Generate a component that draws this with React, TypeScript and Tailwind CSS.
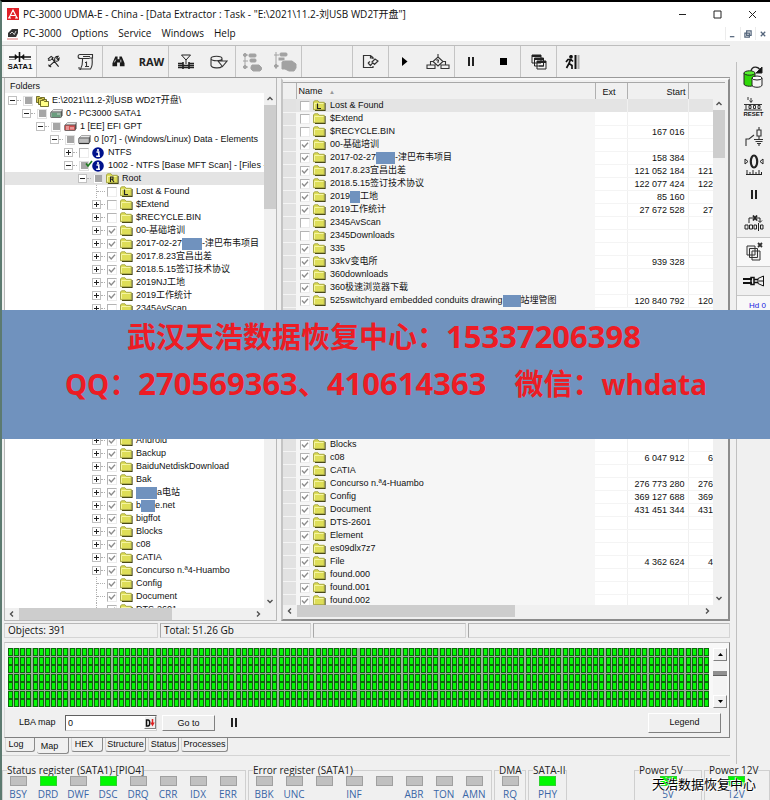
import React from "react";

const UI = "font-['Open_Sans','Noto_Sans_CJK_SC',sans-serif]";
const SMALL = "text-[9px] font-['Liberation_Sans','Noto_Sans_CJK_SC',sans-serif]";

type Tick = "on" | "off" | "mixed";
type IconKind = "folder" | "L" | "R" | "stack" | "disk" | "efi" | "part" | "info";

/* A name is written as plain text; "#20#" marks a masked stretch 20px wide. */
function Name({ text }: { text: string }) {
  return (
    <>
      {text
        .split(/(#\d+#)/)
        .filter(Boolean)
        .map((p, i) =>
          /^#\d+#$/.test(p) ? (
            <span
              key={i}
              className="inline-block h-3 bg-[#7092be] align-bottom"
              style={{ width: Number(p.slice(1, -1)) }}
            />
          ) : (
            <React.Fragment key={i}>{p}</React.Fragment>
          ),
        )}
    </>
  );
}

function Check({ tick, label }: { tick: Tick; label: string }) {
  if (tick === "mixed")
    return (
      <span className="flex size-[10px] shrink-0 items-center justify-center border border-[#e0e0e0] bg-white">
        <input type="checkbox" aria-label={label} className="size-[7px] appearance-none bg-[#a6a6a6]" />
      </span>
    );
  return (
    <span className="relative flex size-[10px] shrink-0">
      <input
        type="checkbox"
        defaultChecked={tick === "on"}
        aria-label={label}
        className="peer size-[10px] appearance-none border border-t-[#b4b4b4] border-r-[#ececec] border-b-[#ececec] border-l-[#b4b4b4] bg-white"
      />
      <svg viewBox="0 0 10 10" className="pointer-events-none absolute inset-0 hidden peer-checked:block" fill="none" stroke="#8c8c8c" strokeWidth="1.3">
        <path d="M2 4.5 L4.2 7 L8 2.8" />
      </svg>
    </span>
  );
}

function RowIcon({ kind }: { kind: IconKind }) {
  if (kind === "info")
    return (
      <svg viewBox="0 0 12 12" className="size-3 shrink-0">
        <circle cx="6" cy="6" r="5.8" fill="#00128c" />
        <circle cx="6" cy="3" r="1.1" fill="#fff" />
        <path d="M4.5 5h2.3v4M4.2 9.2h3.8" stroke="#fff" strokeWidth="1.5" fill="none" />
      </svg>
    );
  if (kind === "disk" || kind === "efi" || kind === "part")
    return (
      <svg viewBox="0 0 13 11" className="h-[11px] w-[13px] shrink-0">
        <path d="M1 4 L3.5 1.5 H12.5 L11 4 Z" fill="#e8e8e8" stroke="#888" strokeWidth=".7" />
        <path d="M11 4 L12.5 1.5 V7.5 L11 9.5 Z" fill="#444" />
        <rect x=".7" y="4" width="10.5" height="5.5" rx=".6" fill={kind === "efi" ? "#d55050" : kind === "disk" ? "#9db8a8" : "#bdbdbd"} stroke="#555" strokeWidth=".8" />
        {kind === "disk" && <path d="M2 6h5M2 8h8" stroke="#2d7d4c" strokeWidth=".9" />}
        {kind === "efi" && <path d="M2 6h3M2 8h3M7 6v2.500M9 6v2.500" stroke="#fff" strokeWidth=".8" />}
        {kind === "part" && <path d="M1 9.500h10" stroke="#333" strokeWidth="1.200" />}
      </svg>
    );
  if (kind === "stack")
    return (
      <svg viewBox="0 0 13 12" className="h-3 w-[13px] shrink-0" stroke="#54540c" strokeWidth=".8">
        <path d="M.5 1.500h3l1 1h4v5h-8z" fill="#d8c850" />
        <path d="M2.500 3.500h3l1 1h4v5h-8z" fill="#e0d860" />
        <path d="M4.500 5.500h3l1 1h4v5h-8z" fill="#ffff88" />
      </svg>
    );
  return (
    <svg viewBox="0 0 13 11" className="h-[11px] w-[13px] shrink-0">
      <path d="M12 3 V10.400 H2" fill="none" stroke="#3a3a10" strokeWidth="1.200" />
      <path d="M.5 9.700 V2 L1.500 .8 H5 L6.200 2.300 H11.300 V9.700 Z" fill="#dede58" stroke="#a0a040" strokeWidth=".9" />
      <path d="M1.500 8.700 V3.500 H10.500" fill="none" stroke="#f7f7a8" strokeWidth=".9" />
      {kind === "L" && <path d="M4.500 3.500v5h3.500" fill="none" stroke="#222" strokeWidth="1.200" />}
      {kind === "R" && <path d="M4.500 9V4h2.500v2.200h-2.500M6 6.200L8 9" fill="none" stroke="#222" strokeWidth="1.100" />}
    </svg>
  );
}

interface Node {
  depth: number;
  exp?: "+" | "-";
  tick: Tick;
  icon: IconKind;
  text: string;
  selected?: boolean;
}

const f = (text: string, tick: Tick = "on"): Node => ({ depth: 6, exp: "+", tick, icon: "folder", text });
const leaf = (text: string, tick: Tick = "on", icon: IconKind = "folder"): Node => ({ depth: 6, tick, icon, text });

const treeTop: Node[] = [
  { depth: 0, exp: "-", tick: "mixed", icon: "stack", text: "E:\\2021\\11.2-刘USB WD2T开盘\\" },
  { depth: 1, exp: "-", tick: "mixed", icon: "disk", text: "0 - PC3000 SATA1" },
  { depth: 2, exp: "-", tick: "mixed", icon: "efi", text: "1 [EE] EFI GPT" },
  { depth: 3, exp: "-", tick: "mixed", icon: "part", text: "0 [07] - (Windows/Linux) Data - Elements" },
  { depth: 4, exp: "+", tick: "off", icon: "info", text: "NTFS" },
  { depth: 4, exp: "-", tick: "mixed", icon: "info", text: "1002 - NTFS [Base MFT Scan] - [Files - 55" },
  { depth: 5, exp: "-", tick: "mixed", icon: "R", text: "Root", selected: true },
  leaf("Lost & Found", "off", "L"),
  f("$Extend", "off"),
  f("$RECYCLE.BIN", "off"),
  f("00-基础培训"),
  f("2017-02-27#20#-津巴布韦项目"),
  f("2017.8.23宜昌出差"),
  f("2018.5.15签订技术协议"),
  f("2019NJ工地"),
  f("2019工作统计"),
  f("2345AvScan", "off"),
];
const treeBottom: Node[] = [
  f("Android"),
  f("Backup"),
  f("BaiduNetdiskDownload"),
  f("Bak"),
  f("#21#a电站"),
  f("b#14#e.net"),
  f("bigffot"),
  f("Blocks"),
  f("c08"),
  f("CATIA"),
  f("Concurso n.ª4-Huambo"),
  leaf("Config"),
  leaf("Document"),
  leaf("DTS-2601"),
];

function TreeRow({ n }: { n: Node }) {
  return (
    <li
      className={`flex h-[13px] shrink-0 items-center whitespace-nowrap ${n.selected ? "bg-[#e4e4e4]" : ""}`}
      style={{ paddingLeft: 3 + n.depth * 14 }}
    >
      <span className="flex w-[15px] shrink-0 items-center">
        {n.exp ? (
          <>
            <button
              aria-label={n.exp === "+" ? "Expand" : "Collapse"}
              className="flex size-[9px] shrink-0 items-center justify-center border border-[#c0c0c0] bg-white"
            >
              <svg viewBox="0 0 5 5" className="size-[5px]" stroke="#222">
                <path d={n.exp === "+" ? "M0 2.500h5M2.500 0v5" : "M0 2.500h5"} />
              </svg>
            </button>
            <span className="w-1 border-t border-dotted border-[#b0b0b0]" />
          </>
        ) : (
          <span className="ml-1 flex h-[13px] w-[9px] items-center border-l border-dotted border-[#b0b0b0]">
            <span className="w-full border-t border-dotted border-[#b0b0b0]" />
          </span>
        )}
      </span>
      <span className="relative flex">
        <Check tick={n.tick} label={n.text} />
        {n.tick === "mixed" && n.depth === 4 && (
          <svg viewBox="0 0 8 8" className="absolute -top-px left-[6px] size-2" fill="none" stroke="#1c7a1c" strokeWidth="1.600">
            <path d="M1 3.500L3 6L7 1" />
          </svg>
        )}
      </span>
      <span className="ml-[2px] flex w-[14px] shrink-0 justify-center">
        <RowIcon kind={n.icon} />
      </span>
      <span className="ml-[3px] leading-[13px]">
        <Name text={n.text} />
      </span>
    </li>
  );
}

type FileRow = [string, Tick, string?];
const filesTop: FileRow[] = [
  ["Lost & Found", "off"],
  ["$Extend", "off"],
  ["$RECYCLE.BIN", "off", "167 016"],
  ["00-基础培训", "on"],
  ["2017-02-27#19#-津巴布韦项目", "on", "158 384"],
  ["2017.8.23宜昌出差", "on", "121 052 184"],
  ["2018.5.15签订技术协议", "on", "122 077 424"],
  ["2019#10#工地", "on", "85 160"],
  ["2019工作统计", "on", "27 672 528"],
  ["2345AvScan", "off"],
  ["2345Downloads", "off"],
  ["335", "on"],
  ["33kV变电所", "on", "939 328"],
  ["360downloads", "on"],
  ["360极速浏览器下载", "on"],
  ["525switchyard embedded conduits drawing#18#站埋管图", "on", "120 840 792"],
];
const filesBottom: FileRow[] = [
  ["Blocks", "on"],
  ["c08", "on", "6 047 912"],
  ["CATIA", "on"],
  ["Concurso n.ª4-Huambo", "on", "276 773 280"],
  ["Config", "on", "369 127 688"],
  ["Document", "on", "431 451 344"],
  ["DTS-2601", "on"],
  ["Element", "on"],
  ["es09dlx7z7", "on"],
  ["File", "on", "4 362 624"],
  ["found.000", "on"],
  ["found.001", "on"],
  ["found.002", "on"],
];

/* Size column: only its first digits fit beside the scroll bar. */
function sizeHead(start?: string) {
  if (!start || start.length < 9) return "";
  return start.split(" ")[0];
}

function FileTr({ row, first }: { row: FileRow; first?: boolean }) {
  const [name, tick, start] = row;
  const cell = first ? "bg-[#e4e4e4]" : "border-b border-[#f4f4f4] bg-white";
  return (
    <tr className="h-[13px]">
      <td className="border-b border-[#f4f4f4] bg-[#e2e2e2] p-0" />
      <td className={`overflow-hidden p-0 ${first ? "bg-[#e4e4e4]" : "bg-[#f6f6f6]"}`}>
        <div className="flex h-[13px] items-center pl-1 leading-[13px] whitespace-nowrap">
          <Check tick={tick} label={name} />
          <span className="mx-[2px] flex w-[14px] justify-center">
            <RowIcon kind={first ? "L" : "folder"} />
          </span>
          <span className="ml-[2px]">
            <Name text={name} />
          </span>
        </div>
      </td>
      <td className={`p-0 ${cell}`} />
      <td className={`border-l border-l-[#f0f0f0] p-0 pr-[3px] text-right leading-3 ${cell}`}>{start}</td>
      <td className={`border-l border-l-[#f0f0f0] p-0 pr-3 text-right leading-3 ${cell}`}>{sizeHead(start)}</td>
    </tr>
  );
}

function Chevron({ d }: { d: "up" | "down" | "left" | "right" }) {
  const path = {
    up: "M1.500 5 L4 2.500 L6.500 5",
    down: "M1.500 3 L4 5.500 L6.500 3",
    left: "M5 1.500 L2.500 4 L5 6.500",
    right: "M3 1.500 L5.500 4 L3 6.500",
  }[d];
  return (
    <svg viewBox="0 0 8 8" className="size-2" fill="none" stroke="#505050" strokeWidth="1.400">
      <path d={path} />
    </svg>
  );
}

function VScroll({ thumb }: { thumb: string }) {
  return (
    <div className="flex h-full w-full flex-col items-center bg-[#f0f0f0]">
      <button aria-label="Scroll up" className="flex h-3 w-full shrink-0 items-center justify-center">
        <Chevron d="up" />
      </button>
      <div className={`w-full bg-[#cdcdcd] ${thumb}`} />
      <button aria-label="Scroll down" className="mt-auto flex h-[14px] w-full items-center justify-center">
        <Chevron d="down" />
      </button>
    </div>
  );
}

function HScroll({ thumb }: { thumb: string }) {
  return (
    <div className="flex h-3 shrink-0 items-stretch bg-[#f0f0f0] pr-3">
      <button aria-label="Scroll left" className="flex w-[14px] items-center justify-center">
        <Chevron d="left" />
      </button>
      <div className={`bg-[#cdcdcd] ${thumb}`} />
      <button aria-label="Scroll right" className="ml-auto flex w-3 items-center justify-center">
        <Chevron d="right" />
      </button>
    </div>
  );
}

/* Toolbar ------------------------------------------------------------- */

function ToolGroup({ width, children }: { width: string; children?: React.ReactNode }) {
  return (
    <div className={`flex shrink-0 items-center justify-around border-r border-[#c4c4c4] ${width}`}>{children}</div>
  );
}
function Tool({ label, children }: { label: string; children: React.ReactNode }) {
  return (
    <button aria-label={label} className="flex h-7 min-w-6 items-center justify-center">
      {children}
    </button>
  );
}

function Toolbar() {
  return (
    <div role="toolbar" className="flex h-8 shrink-0 border-t border-[#bdbdbd] bg-[#f0f0f0] pl-[2px]">
      <ToolGroup width="w-[33px] bg-[#f8f8f8]">
        <button className="flex flex-col items-center">
          <svg viewBox="0 0 24 10" className="h-[10px] w-6" stroke="#111" strokeWidth="1.600" fill="#111">
            <path d="M1 5h22M11.500 0v10" />
            <path d="M7 2.500l3 2.500-3 2.500zM16 2.500L13 5l3 2.500z" strokeWidth=".6" />
            <path d="M1 7.500h7M15 7.500h8" strokeWidth=".8" stroke="#777" />
          </svg>
          <span className="font-['Liberation_Sans',sans-serif] text-[8px] leading-[9px] font-bold">SATA1</span>
        </button>
      </ToolGroup>
      <ToolGroup width="w-[66px]">
        <Tool label="Tools">
          <svg viewBox="0 0 14 14" className="size-[13px]" stroke="#222" strokeWidth="1.200" fill="none">
            <path d="M1 4.500 L4.500 1.500 L6.500 3 L4.500 5 M5.500 4 L12.500 12.500M2 12.500 L9 6M8.500 6.500 C7.500 3 9 1.500 12 1.500 L10.500 3.500 L11.500 4.800 L13 3.500 C13 6.500 11 7 9.500 6.500M1 5.500h3M1.500 10.500l3 2.500" />
          </svg>
        </Tool>
        <Tool label="Script">
          <svg viewBox="0 0 18 18" className="size-[18px]" stroke="#333" strokeWidth="1.100" fill="none">
            <path d="M3 1.500h12.500v3.500h-3M3 1.500c-2.500 0-2.500 4 0 4h9.500M5.500 5.500c0 5 .5 7-2 10.500h10c2.500-3.500 2-6 1.500-11M2 14c0 2 0 2.500 2 2.500M6 3.500h7M9.500 8.500v5M8 13.500h4M8 9.500h2" />
          </svg>
        </Tool>
      </ToolGroup>
      <ToolGroup width="w-[66px]">
        <Tool label="Find">
          <svg viewBox="0 0 14 14" className="size-[13px]" fill="#1a1a1a">
            <path d="M3.500 1.500h2.500v3h2v-3h2.500l3 7.500v3h-5v-4h-3v4h-5v-3z" />
            <path d="M2.500 8l1.500-3M9.500 5v3" stroke="#fff" strokeWidth=".8" />
          </svg>
        </Tool>
        <button className={`text-[11px] leading-4 font-bold text-[#222] ${UI}`}>RAW</button>
      </ToolGroup>
      <ToolGroup width="w-[67px]">
        <Tool label="Copy map">
          <svg viewBox="0 0 18 16" className="h-4 w-[18px]" stroke="#222" fill="none">
            <path d="M4.500 1h9L9 6zM9 6v4" />
            <path d="M1 9.500h5M12 9.500h5M1 11.500h16M1 13.500h16M6 8v7M12 8v7" strokeWidth="1.600" />
          </svg>
        </Tool>
        <Tool label="Open image">
          <svg viewBox="0 0 18 14" className="h-[14px] w-[18px]" stroke="#333" strokeWidth="1.100" fill="none">
            <path d="M1 3.500v7c1 3 9 3 11 1M1 3.500c0-3 11-3 11 0c0 3-11 3-11 0M12 3.500v2M8 6h9l-4.500 5.500z" />
          </svg>
        </Tool>
      </ToolGroup>
      <ToolGroup width="w-[66px]">
        <Tool label="Add to map">
          <svg viewBox="0 0 20 20" className="size-5" fill="#a2a2a2" stroke="#a2a2a2">
            <path d="M3 1v16M1 3h5M1 9h5M1 15h5" fill="none" />
            <rect x="7" y="2" width="7" height="3" rx="1" />
            <rect x="8" y="7" width="6" height="3" rx="1" />
            <path d="M10 13h7l2.500 2.500v2L18 19h-7l-2-2v-2z" />
            <circle cx="3" cy="3" r="1.500" />
            <circle cx="3" cy="15" r="1.500" />
          </svg>
        </Tool>
        <Tool label="Build map">
          <svg viewBox="0 0 24 20" className="h-5 w-6" fill="#a2a2a2" stroke="#a2a2a2">
            <path d="M3 0v17M1 3h5M1 14h5" fill="none" />
            <rect x="7" y="1" width="7" height="3" rx="1" />
            <rect x="6" y="6" width="5" height="2" />
            <path d="M9 10l3-1h7l4 3v4l-2 3h-5l-4-2h-3z" />
            <circle cx="3" cy="14" r="1.500" />
          </svg>
        </Tool>
      </ToolGroup>
      <ToolGroup width="w-[51px]" />
      <ToolGroup width="w-9">
        <Tool label="Edit task">
          <svg viewBox="0 0 17 16" className="h-4 w-[17px]" stroke="#333" strokeWidth="1.200" fill="none">
            <path d="M11 5V3.500L8.500 1.500H1.500v12h9.500V12M8.500 1.500V4H11M6 9l2.500 2.500L10.500 9M10 8l3-3 3 2-3.500 3.500zM6 9l2-1.500" />
          </svg>
        </Tool>
      </ToolGroup>
      <ToolGroup width="w-[66px]">
        <Tool label="Start">
          <svg viewBox="0 0 6 9" className="h-[9px] w-[6px]" fill="#000">
            <path d="M0 0l5.500 4.500L0 9z" />
          </svg>
        </Tool>
        <Tool label="Build tree">
          <svg viewBox="0 0 24 16" className="h-4 w-6" stroke="#333" strokeWidth="1.100" fill="none">
            <path d="M12 0v3M12 3l5 4.500-5 4.500-5-4.500zM7 7.500H4.500V11M17 7.500h2.500V11M1 11h8v3.500H1zM15 11h8v3.500h-8zM10.500 6.500c1-1.500 3 0 1.500 1v1.500" />
          </svg>
        </Tool>
      </ToolGroup>
      <ToolGroup width="w-[66px]">
        <Tool label="Pause">
          <svg viewBox="0 0 6 9" className="h-[9px] w-[6px]" fill="#222">
            <path d="M0 0h2v9H0zM4 0h2v9H4z" />
          </svg>
        </Tool>
        <Tool label="Stop">
          <svg viewBox="0 0 7 7" className="size-[7px]">
            <rect width="7" height="7" />
          </svg>
        </Tool>
      </ToolGroup>
      <ToolGroup width="w-9">
        <Tool label="Windows">
          <svg viewBox="0 0 16 16" className="size-4" stroke="#222" fill="#f0f0f0">
            <path d="M1 1h9v8H1zM3.500 4h9v8h-9zM6 7h9v8H6z" />
            <path d="M1 2h9M3.500 5h9M6 8h9" strokeWidth="2" />
            <path d="M8 12h5" />
          </svg>
        </Tool>
      </ToolGroup>
      <div className="flex items-center pl-1">
        <Tool label="Exit">
          <svg viewBox="0 0 16 14" className="h-[14px] w-4" stroke="#111" strokeWidth="1.700" fill="none">
            <path d="M5.500 4.500L4 8.500l3 2v3.500M4 8.500L1.500 13M1 7l2-2.500h3l2 2" />
            <circle cx="6" cy="1.800" r="1" fill="#111" />
            <path d="M10.500 0v14" strokeWidth="2" />
            <path d="M13.500 0v14" strokeWidth="2" stroke="#aaa" />
          </svg>
        </Tool>
      </div>
    </div>
  );
}

/* Right-hand tool column ------------------------------------------------ */

function SideBtn({ label, h, className = "", children }: { label: string; h: string; className?: string; children: React.ReactNode }) {
  return (
    <button aria-label={label} className={`flex w-full shrink-0 items-center justify-center ${h} ${className}`}>
      {children}
    </button>
  );
}

function SideBar() {
  return (
    <aside className="mt-[17px] flex w-[34px] shrink-0 flex-col border-l border-[#c0c0c0]">
      <SideBtn label="Power" h="h-[30px]">
        <svg viewBox="0 0 22 24" className="h-6 w-[22px]" stroke="#222">
          <path d="M8 6c1-5 7-5 9-1" fill="none" strokeWidth="1.300" />
          <path d="M19 2v6h-6z" fill="#111" />
          <path d="M1 8v11c0 3 11 3 11 0V8" fill="#30d808" />
          <ellipse cx="6.500" cy="8" rx="5.500" ry="2.200" fill="#58f030" />
          <path d="M9 13v7c0 3 10 3 10 0v-7" fill="#f4f4f4" />
          <ellipse cx="14" cy="13" rx="5" ry="2" fill="#fff" />
        </svg>
      </SideBtn>
      <SideBtn label="Reset" h="h-[30px]">
        <span className="flex flex-col items-center">
          <svg viewBox="0 0 18 14" className="h-[14px] w-[18px]" stroke="#333" fill="none">
            <path d="M4 0v3M7 1v4M5.500 3.500L7 5.500l1.500-2M0 7.500h18M0 13h18M2 7v6M5 8.500v3h2v-3zM9.500 8.500v3h2v-3zM14 8.500v3h2v-3z" />
          </svg>
          <span className="font-['Liberation_Sans',sans-serif] text-[6px] leading-[7px] font-bold">RESET</span>
        </span>
      </SideBtn>
      <SideBtn label="Ground" h="h-[29px]">
        <svg viewBox="0 0 20 20" className="size-5" stroke="#333" strokeWidth="1.100" fill="none">
          <path d="M2 19v-7h3l5-4M2 17v2M15 0v3M13 3h4v6h-4zM15 9v4M10 12.500h9M11.500 14.500h7M13 16.500h4M15 16v3" />
        </svg>
      </SideBtn>
      <SideBtn label="Zero track" h="h-7">
        <svg viewBox="0 0 20 22" className="h-[22px] w-5" stroke="#222" fill="none">
          <ellipse cx="10" cy="7.500" rx="3.200" ry="6" strokeWidth="2.200" />
          <path d="M1 5v5l3-2.500zM19 5v5l-3-2.500zM2 20.500h16M3 16v4M6 18v2M9 16v4M12 18v2M15 16v4M17.500 18v2" />
        </svg>
      </SideBtn>
      <SideBtn label="Pause" h="h-[30px]">
        <svg viewBox="0 0 6 9" className="h-[9px] w-[6px]" fill="#222">
          <path d="M0 0h2v9H0zM4 0h2v9H4z" />
        </svg>
      </SideBtn>
      <SideBtn label="Sector" h="h-[28px]">
        <svg viewBox="0 0 20 16" className="h-4 w-5" stroke="#222" fill="none">
          <path d="M5 8V3h11v4M14 5.500l2 2 2-2M1 10h3v4H1zM5.500 10h3v4h-3zM10 10h2.500v4H10zM14.500 8v8M16.500 10H19v4h-2.500z" />
          <path d="M9 0.500l4 5M13 .5L9 5.500" strokeWidth="1.800" />
        </svg>
      </SideBtn>
      <SideBtn label="Copy" h="h-[30px]" className="border-y border-[#c8c8c8] bg-[#f8f8f8]">
        <svg viewBox="0 0 20 20" className="size-5" stroke="#333" fill="#f0f0f0">
          <path d="M3 4h8v9H3zM5.500 6.500h8v9h-8zM8 9h8v9H8z" />
          <path d="M14 1l4 4M18 1l-4 4" strokeWidth="1.800" />
        </svg>
      </SideBtn>
      <SideBtn label="Connector" h="h-[28px]">
        <svg viewBox="0 0 22 12" className="h-3 w-[22px]" stroke="#111" fill="none">
          <path d="M0 4h9M0 8h9" strokeWidth="2" />
          <path d="M8 2.500h3v7H8zM11 4.500h4M11 7.500h4" strokeWidth="1.500" />
          <path d="M15 3.500L20.500 1v10L15 8.500zM16 6h4.500" />
        </svg>
      </SideBtn>
      <button className="h-10 shrink-0 border-t border-[#c8c8c8] bg-[#f8f8f8] pb-5 pl-2 text-center font-['Liberation_Sans'] text-[8px] leading-3 text-[#2020e0]">
        Hd 0
      </button>
    </aside>
  );
}

/* LBA map ---------------------------------------------------------------- */

function LbaMap() {
  const cols = 114;
  const rows = 7;
  const cells: React.ReactNode[] = [];
  for (let r = 0; r < rows; r++)
    for (let c = 0; c < cols; c++) {
      const x = Math.round(c * 6.15);
      const y = Math.round(r * 8.5);
      cells.push(<rect key={`${r}-${c}`} x={x + 0.5} y={y + 0.5} width={4} height={7} />);
    }
  return (
    <svg viewBox="0 0 700 59" preserveAspectRatio="none" className="h-[59px] min-w-0 flex-1" role="img" aria-label="LBA map">
      <rect width="700" height="59" fill="#9aa89a" />
      <g fill="#06f806" stroke="#0a6a0a" strokeWidth="1" shapeRendering="crispEdges">
        {cells}
      </g>
    </svg>
  );
}

const raised = "border border-t-white border-l-white border-r-[#808080] border-b-[#808080] bg-[#f0f0f0]";

function Tab({ label, width, active }: { label: string; width: string; active?: boolean }) {
  return (
    <button
      role="tab"
      aria-selected={!!active}
      className={`rounded-b-[3px] border-r border-b border-[#8a8a8a] text-center leading-[13px] ${width} ${
        active ? "h-4 pt-[2px]" : "h-[14px] border-l border-l-[#d8d8d8]"
      }`}
    >
      {label}
    </button>
  );
}

function Led({ on, label, pitch = "w-[30px]" }: { on?: boolean; label: string; pitch?: string }) {
  return (
    <div className={`flex shrink-0 flex-col items-center gap-[2px] ${pitch}`}>
      <span className={`h-[10px] w-[17px] border ${on ? "border-[#30d030] bg-[#00f800]" : "border-[#a0a0a0] bg-[#c0c0c0]"}`} />
      <span className="h-3 text-[10px] leading-3 whitespace-nowrap text-[#3a66a6]">{label}</span>
    </div>
  );
}

function Group({ title, width, children }: { title: string; width: string; children: React.ReactNode }) {
  return (
    <fieldset className={`h-[42px] min-w-0 shrink-0 border border-[#cfcfcf] ${width}`}>
      <legend className="ml-1 h-3 text-[10px] leading-3 whitespace-nowrap text-[#222]">{title}</legend>
      <div className="flex">{children}</div>
    </fieldset>
  );
}

export default function App() {
  return (
    <div className={`relative flex h-screen flex-col overflow-hidden border-t-2 border-l-2 border-t-black border-l-[#5c7a70] bg-[#f0f0f0] text-[10px] text-[#111] ${UI}`}>
      <header className="flex h-6 shrink-0 items-center bg-white pl-[5px]">
        <svg viewBox="0 0 12 12" className="size-3">
          <rect width="12" height="12" fill="#e02028" />
          <path d="M2 10L6 2l4 8M3.500 7.500h5M1 10h3M8 10h3" stroke="#fff" strokeWidth="1.200" fill="none" />
        </svg>
        <h1 className="ml-1 text-[10px] leading-4 whitespace-nowrap">
          PC-3000 UDMA-E - China - [Data Extractor : Task - "E:\2021\11.2-刘USB WD2T开盘"]
        </h1>
        <div className="ml-auto flex">
          {["M1 4.500h7", "M1 1h7v7H1z", "M1 1l7 7M8 1L1 8"].map((d, i) => (
            <button key={d} aria-label={["Minimize", "Maximize", "Close"][i]} className="flex w-[35px] justify-center">
              <svg viewBox="0 0 9 9" className="size-[9px]" fill="none" stroke="#222">
                <path d={d} />
              </svg>
            </button>
          ))}
        </div>
      </header>

      <nav className="flex h-[15px] shrink-0 items-center bg-white pl-[5px]">
        <svg viewBox="0 0 12 12" className="size-3">
          <path d="M1 5l4-4h6v4L9 9H1z" fill="#333" />
          <path d="M3 6l2-2 2 2M9 3l-2 4" stroke="#ccc" strokeWidth="1" fill="none" />
          <path d="M0 11h11" stroke="#e8a0a0" strokeWidth="1.500" />
        </svg>
        <div className="ml-1 flex gap-[10px] leading-[15px]">
          {["PC-3000", "Options", "Service", "Windows", "Help"].map((m) => (
            <button key={m}>{m}</button>
          ))}
        </div>
        <div className="ml-auto flex">
          {["M1 7.500h5", "M3 1h5v5H3zM1 3.500h5V8H1z", "M2 2l5 5M7 2L2 7"].map((d, i) => (
            <button
              key={d}
              aria-label={["Minimize child", "Restore child", "Close child"][i]}
              className="flex h-[13px] w-[15px] items-center justify-center border-l border-[#ececec]"
            >
              <svg viewBox="0 0 9 9" className="size-2" fill="none" stroke="#55667c" strokeWidth="1.400">
                <path d={d} />
              </svg>
            </button>
          ))}
        </div>
      </nav>

      <div className="mt-1 flex min-h-0 flex-1">
        <main className="flex min-w-0 flex-1 flex-col pr-[6px]">
          <Toolbar />

          {/* Folder tree and file list */}
          <div className={`flex min-h-0 flex-1 gap-1 border-t border-[#9a9a9a] pl-[2px] ${SMALL}`}>
            <section className="flex w-[273px] shrink-0 flex-col border-x border-b border-[#b8b8b8]">
              <h2 className="h-[15px] shrink-0 pt-[2px] pl-[5px] leading-[13px]">Folders</h2>
              <div className="flex min-h-0 flex-1 bg-white">
                <ul className="flex min-w-0 flex-1 flex-col overflow-hidden pt-px">
                  {treeTop.map((n) => (
                    <TreeRow key={n.text} n={n} />
                  ))}
                  <li aria-hidden="true" className="h-[119px] shrink-0" />
                  {treeBottom.map((n) => (
                    <TreeRow key={n.text} n={n} />
                  ))}
                </ul>
                <div className="w-3 shrink-0">
                  <VScroll thumb="h-[104px]" />
                </div>
              </div>
              <HScroll thumb="w-[153px]" />
            </section>

            <section className="flex min-w-0 flex-1 flex-col border-2 border-t-[#f8f8f8] border-r-[#8c8c8c] border-b-[#8c8c8c] border-l-[#c4c4c4] pt-[2px]">
              <div className="relative mr-[3px] min-h-0 flex-1 overflow-hidden border-t border-[#a8a8a8] bg-white">
                <table className="w-full table-fixed border-collapse">
                  <colgroup>
                    <col className="w-[13px]" />
                    <col />
                    <col className="w-8" />
                    <col className="w-[61px]" />
                    <col className="w-[37px]" />
                  </colgroup>
                  <thead>
                    <tr className="h-[15px] bg-[#f0f0f0] text-left">
                      <th className="border-r border-[#b0b0b0] p-0" />
                      <th className="border-r border-[#b0b0b0] p-0 pt-[2px] pl-[2px] leading-[13px] font-normal">
                        Name <span className="ml-1 text-[6px] text-[#999]">▲</span>
                      </th>
                      <th className="border-r border-[#b0b0b0] p-0 pt-[2px] pl-[7px] leading-[13px] font-normal">Ext</th>
                      <th className="border-r border-[#b0b0b0] p-0 pt-[2px] pr-[2px] text-right leading-[13px] font-normal">Start</th>
                      <th className="p-0" />
                    </tr>
                  </thead>
                  <tbody>
                    {filesTop.map((r, i) => (
                      <FileTr key={r[0]} row={r} first={i === 0} />
                    ))}
                    <tr aria-hidden="true" className="h-[131px]">
                      <td className="bg-[#e2e2e2] p-0" />
                      <td className="bg-[#f6f6f6] p-0" />
                    </tr>
                    {filesBottom.map((r) => (
                      <FileTr key={r[0]} row={r} />
                    ))}
                  </tbody>
                </table>
                <div className="absolute top-[15px] right-0 bottom-0 w-3">
                  <VScroll thumb="h-12" />
                </div>
              </div>
              <div className="mr-[3px] mb-[2px]">
                <HScroll thumb="w-[218px]" />
              </div>
            </section>
          </div>

          {/* Status line */}
          <div className="mt-[2px] flex h-[15px] shrink-0 gap-[2px] pl-[2px] text-[10px] leading-[13px]">
            <div className="w-[154px] border border-[#d4d4d4] border-t-[#b8b8b8] pl-[3px]">Objects: 391</div>
            <div className="w-[151px] border border-[#d4d4d4] border-t-[#b8b8b8] border-l-[#a8a8a8] pl-[3px]">Total: 51.26 Gb</div>
            <div className="w-[153px] border border-[#d4d4d4] border-t-[#b8b8b8] border-l-[#a8a8a8]" />
            <div className="flex-1 border border-[#d4d4d4] border-t-[#b8b8b8] border-l-[#a8a8a8]" />
          </div>

          {/* Map panel */}
          <section className={`mt-1 ml-[2px] shrink-0 border border-t-[#c0c0c0] border-r-[#808080] border-b-[#808080] border-l-[#d8d8d8] ${SMALL}`}>
            <div className="flex gap-1 bg-[#f8f8f8] pt-[5px] pr-[2px] pl-[3px]">
              <LbaMap />
              <div className="flex h-[60px] w-[14px] flex-col bg-[#f4f4f4]">
                <button aria-label="Map up" className={`flex h-[13px] items-center justify-center ${raised}`}>
                  <svg viewBox="0 0 5 3" className="h-[3px] w-[5px]">
                    <path d="M0 3L2.500 0L5 3z" />
                  </svg>
                </button>
                <div className="mt-[10px] h-[5px] border-b border-[#606060] bg-[#909090]" />
                <button aria-label="Map down" className={`mt-auto flex h-[13px] items-center justify-center ${raised}`}>
                  <svg viewBox="0 0 5 3" className="h-[3px] w-[5px]">
                    <path d="M0 0L2.500 3L5 0z" />
                  </svg>
                </button>
              </div>
            </div>
            <div className="flex h-[29px] items-center pr-2 pl-[14px]">
              <label htmlFor="lba" className="w-[46px]">
                LBA map
              </label>
              <div className="flex h-4 w-[92px] items-center border border-t-[#606060] border-r-[#d0d0d0] border-b-[#d0d0d0] border-l-[#606060] bg-white">
                <input id="lba" defaultValue="0" className="min-w-0 flex-1 bg-transparent pl-[2px] leading-3 outline-none" />
                <button aria-label="Pick number base" className={`flex h-[13px] w-3 items-center justify-center ${raised}`}>
                  <svg viewBox="0 0 10 8" className="h-2 w-[10px]" fill="none">
                    <path d="M1.500 1h1.500c2.300 0 2.300 6 0 6H1.500z" stroke="#111" strokeWidth="1.500" />
                    <path d="M7.500 0v4" stroke="#e02020" strokeWidth="1.500" />
                    <path d="M5.300 3.500h4.400L7.500 7.500z" fill="#e02020" />
                  </svg>
                </button>
              </div>
              <button className={`ml-[5px] h-4 w-[53px] leading-3 ${raised}`}>Go to</button>
              <button aria-label="Pause map" className="ml-4">
                <svg viewBox="0 0 6 9" className="h-[9px] w-[6px]" fill="#222">
                  <path d="M0 0h2v9H0zM4 0h2v9H4z" />
                </svg>
              </button>
              <button className={`ml-auto h-5 w-[73px] ${raised}`}>Legend</button>
            </div>
          </section>

          <div role="tablist" className={`flex h-[17px] shrink-0 gap-[2px] pl-[3px] ${SMALL}`}>
            <Tab label="Log" width="w-[30px] pr-[8px]" />
            <Tab label="Map" width="w-8 pr-[6px]" active />
            <Tab label="HEX" width="w-8 pr-[6px]" />
            <Tab label="Structure" width="w-[41px]" />
            <Tab label="Status" width="w-[31px]" />
            <Tab label="Processes" width="w-[47px]" />
          </div>
          <div className="h-[9px] shrink-0 border-t border-[#d4d4d4]" />
        </main>
        <SideBar />
      </div>

      <footer className="flex h-9 shrink-0 gap-[2px]">
        <Group title="Status register (SATA1)-[PIO4]" width="w-[244px]">
          {["BSY", "DRD", "DWF", "DSC", "DRQ", "CRR", "IDX", "ERR"].map((l) => (
            <Led key={l} label={l} on={l === "DRD" || l === "DSC"} />
          ))}
        </Group>
        <Group title="Error register (SATA1)" width="w-[244px]">
          {["BBK", "UNC", "", "INF", "", "ABR", "TON", "AMN"].map((l, i) => (
            <Led key={i} label={l} />
          ))}
        </Group>
        <Group title="DMA" width="w-8">
          <Led label="RQ" />
        </Group>
        <Group title="SATA-II" width="w-[39px]">
          <Led label="PHY" pitch="w-[37px]" on />
        </Group>
        <div className="min-w-0 flex-1" />
        <Group title="Power 5V" width="w-[68px]">
          <Led label="5V" pitch="w-[66px]" on />
        </Group>
        <Group title="Power 12V" width="w-[66px]">
          <Led label="12V" pitch="w-[62px]" on />
        </Group>
      </footer>

      {/* Contact banner laid over the window */}
      <div className="absolute inset-x-0 top-[308px] flex h-[129px] flex-col items-center bg-[#7092be] pt-1 font-['Noto_Sans','Noto_Sans_CJK_SC',sans-serif] text-[29px] font-bold text-[#ed1c24]">
        <p className="flex h-[47px] items-baseline pr-1 leading-[44px] whitespace-nowrap">
          武汉天浩数据恢复中心：<span className="text-[31px]">15337206398</span>
        </p>
        <p className="flex h-[47px] items-baseline leading-[44px] whitespace-nowrap">
          <span className="text-[28px]">QQ</span>：<span className="text-[31px]">270569363</span>、
          <span className="text-[31px]">410614363</span>
          <span className="ml-7">微信：</span>
          <span className="text-[28px]">whdata</span>
        </p>
      </div>

      <p className="absolute right-[14px] bottom-[6px] font-['Noto_Sans_CJK_SC',sans-serif] text-[13px] leading-5 text-black [text-shadow:0_0_1px_#fff,1px_1px_0_#fff,-1px_-1px_0_#fff]">
        天浩数据恢复中心
      </p>
    </div>
  );
}
